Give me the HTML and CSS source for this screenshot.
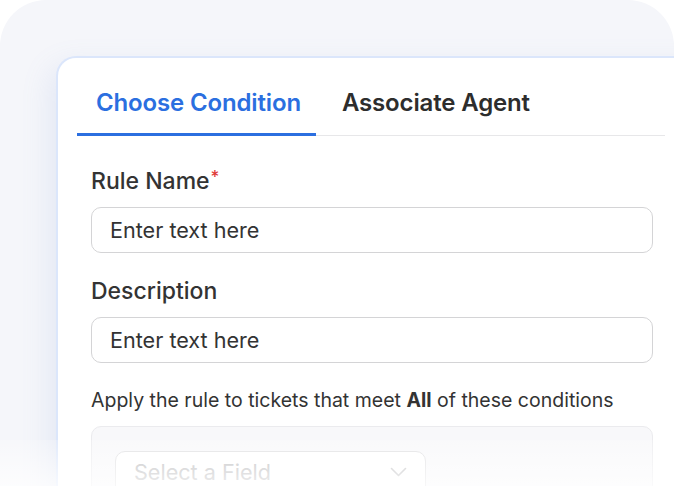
FILE: index.html
```html
<!DOCTYPE html>
<html>
<head>
<meta charset="utf-8">
<link rel="stylesheet" href="styles.css">
</head>
<body>
<div class="stage">
  <div class="card">
    <div class="tabs">
      <div class="tab active">Choose Condition</div>
      <div class="tab">Associate Agent</div>
    </div>
    <div class="form">
      <div class="label">Rule Name<span class="req">*</span></div>
      <div class="input">Enter text here</div>
      <div class="label label-2">Description</div>
      <div class="input">Enter text here</div>
      <p class="hint">Apply the rule to tickets that meet <b>All</b> of these conditions</p>
      <div class="conditions">
        <div class="select">
          <span>Select a Field</span>
          <svg class="chev" width="17" height="10" viewBox="0 0 17 10"><path d="M1.5 1.5 L8.5 8.5 L15.5 1.5" fill="none" stroke="#b9b9bb" stroke-width="1.6" stroke-linecap="round" stroke-linejoin="round"/></svg>
        </div>
      </div>
    </div>
  </div>
  <div class="fade"></div>
</div>
</body>
</html>
```
FILE: styles.css
```css
* { box-sizing: border-box; }
html, body { margin: 0; padding: 0; background: #ffffff; }
body { font-family: Inter, "Noto Sans", sans-serif; color: #2e2e2e; }

.stage {
  position: relative;
  width: 674px;
  height: 486px;
  overflow: hidden;
  background: #f5f6fa;
  border-radius: 46px 46px 0 0;
  padding: 56px 0 0 56px;
}

.card {
  width: 660px;
  height: 480px;
  background: #ffffff;
  border: 2px solid #dbe6fb;
  border-right: none;
  border-radius: 20px 0 0 0;
  padding: 20px 0 0 19px;
  box-shadow: -6px 10px 30px rgba(120, 150, 210, 0.14);
}

.tabs {
  display: flex;
  width: 588px;
  border-bottom: 1px solid #e7e7e9;
}

.tab {
  font-size: 24px;
  font-weight: 600;
  line-height: 30px;
  letter-spacing: -0.15px;
  padding: 10px 15px 15px 19px;
  color: #2d2d2d;
}
.tab.active {
  color: #2b6fe0;
  border-bottom: 3px solid #2b6fe0;
  margin-bottom: -1px;
}
.tab + .tab { padding-left: 26px; }

.form {
  padding: 0 12px 0 14px;
}

.label {
  font-size: 23px;
  font-weight: 500;
  line-height: 28px;
  color: #333333;
  margin-top: 27px;
}
.label-2 { margin-top: 24px; }
.req { color: #e03a3a; font-size: 17px; vertical-align: 6px; margin-left: 1px; }

.input {
  height: 46px;
  margin-top: 12px;
  border: 1px solid #d4d4d6;
  border-radius: 10px;
  padding: 0 18px;
  display: flex;
  align-items: center;
  font-size: 21.6px;
  color: #333333;
  width: 562px;
}

.hint {
  margin: 25px 0 0;
  font-size: 19.5px;
  line-height: 24px;
  color: #333333;
}
.hint b { font-weight: 700; }

.conditions {
  margin-top: 14px;
  width: 562px;
  height: 100px;
  background: #f8f8fa;
  border: 1px solid #ebebee;
  border-radius: 10px;
  padding: 24px 0 0 23px;
}

.select {
  width: 311px;
  height: 46px;
  background: #ffffff;
  border: 1px solid #dedee0;
  border-radius: 10px;
  display: flex;
  align-items: center;
  justify-content: space-between;
  padding: 0 18px 4px 18px;
  font-size: 21.6px;
  line-height: 26px;
  color: #b4b4b6;
}

.fade {
  position: absolute;
  left: 0;
  right: 0;
  bottom: 0;
  height: 46px;
  background: linear-gradient(to bottom, rgba(255,255,255,0.2), rgba(255,255,255,0.75));
}
```
